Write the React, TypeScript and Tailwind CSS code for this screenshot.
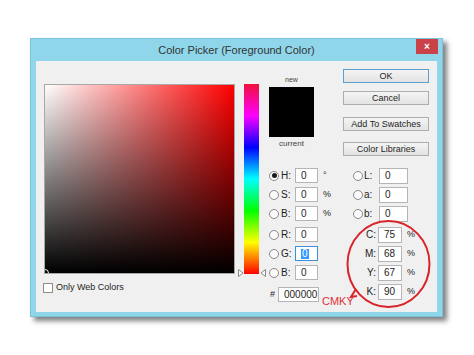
import React from 'react';

const Radio = ({ checked = false }: { checked?: boolean }) => (
  <span className="flex h-[10px] w-[10px] shrink-0 items-center justify-center rounded-full border border-[#8a8a8a] bg-[#fbfbfb]">
    {checked && <span className="h-[5px] w-[5px] rounded-full bg-[#1a1a1a]" />}
  </span>
);

const Field = ({ value, w, h = 15, focused = false }: { value: string; w: number; h?: number; focused?: boolean }) => (
  <span
    className={`flex items-center bg-white pl-[5px] text-[10px] leading-none ${focused ? 'border border-[#3c8fd8]' : 'border border-[#b5b5b5]'}`}
    style={{ width: w, height: h }}
  >
    {focused ? <span className="bg-[#3399ff] px-[1px] text-white">{value}</span> : value}
  </span>
);

const HsbRow = ({ label, value, unit, checked, focused }: { label: string; value: string; unit?: string; checked?: boolean; focused?: boolean }) => (
  <div className="flex h-[19px] items-center">
    <Radio checked={checked} />
    <span className="ml-[2px] w-[14px] text-[10px]">{label}</span>
    <Field value={value} w={23} focused={focused} />
    {unit && <span className="ml-[5px] text-[9px]">{unit}</span>}
  </div>
);

const LabRow = ({ label, value }: { label: string; value: string }) => (
  <div className="flex h-[19px] items-center">
    <Radio />
    <span className="ml-[1px] w-[15px] text-[10px]">{label}</span>
    <Field value={value} w={29} h={16} />
  </div>
);

const CmykRow = ({ label, value }: { label: string; value: string }) => (
  <div className="flex h-[19px] items-center">
    <span className="w-[25px] pr-[2px] text-right text-[10px]">{label}</span>
    <Field value={value} w={24} h={16} />
    <span className="ml-[5px] text-[9px]">%</span>
  </div>
);

const Btn = ({ children, primary = false }: { children: React.ReactNode; primary?: boolean }) => (
  <div
    className={`flex h-[14px] w-[86px] items-center justify-center bg-[linear-gradient(to_bottom,#f4f4f4,#e3e3e3)] text-[9px] leading-none ${primary ? 'border border-[#5c9fcf]' : 'border border-[#adadad]'}`}
  >
    {children}
  </div>
);

export default function App() {
  return (
    <div className="h-[355px] w-[474px] overflow-hidden bg-white pt-[38px] pl-[30px] font-['Liberation_Sans',Arial,sans-serif] text-[#1e1e1e]">
      <div className="flex h-[279px] w-[413px] flex-col border border-[#79c4d8] bg-[#8fd6ea] shadow-[4px_4px_5px_rgba(0,0,0,0.5)]">
        {/* title bar */}
        <div className="relative flex h-[22px] items-center justify-center text-[11px] text-[#333]">
          Color Picker (Foreground Color)
          <div className="absolute right-[4px] top-0 flex h-[15px] w-[22px] items-center justify-center bg-[#cb4148] text-[10px] font-bold text-white">
            ×
          </div>
        </div>

        {/* body */}
        <div className="relative mx-[5px] flex h-[251px] bg-[#f0f0f0] pl-[8px] pt-[8px]">
          {/* left: field + hue */}
          <div className="flex flex-col pt-[15px]">
            <div className="flex">
              <div className="relative h-[190px] w-[191px] overflow-hidden border border-[#a8a8a8] bg-[linear-gradient(to_bottom,transparent,#000),linear-gradient(to_right,#fff,#f00)]">
                <span className="absolute bottom-[-4px] left-[-4px] h-[8px] w-[8px] rounded-full border border-white" />
              </div>
              <div className="relative ml-[9px] h-[190px] w-[15px] bg-[linear-gradient(to_bottom,#f0103c,#f0f,#00f,#0ff,#0f0,#ff0,#f00)]">
                <svg className="absolute bottom-[-3px] left-[-6px]" width="6" height="8" viewBox="0 0 6 8">
                  <path d="M0.5 0.5 L5 4 L0.5 7.5 Z" fill="#fff" stroke="#888" strokeWidth="1" />
                </svg>
                <svg className="absolute bottom-[-3px] right-[-7px]" width="6" height="8" viewBox="0 0 6 8">
                  <path d="M5.5 0.5 L1 4 L5.5 7.5 Z" fill="#fff" stroke="#888" strokeWidth="1" />
                </svg>
              </div>
            </div>
            <div className="mt-[7px] flex items-center">
              <span className="ml-[-1px] h-[10px] w-[10px] border border-[#8a8a8a] bg-white" />
              <span className="ml-[3px] text-[9px]">Only Web Colors</span>
            </div>
          </div>

          {/* right area */}
          <div className="ml-[10px] flex w-[162px] flex-col">
            <div className="flex h-[87px]">
              <div className="flex w-[45px] flex-col items-center">
                <span className="mt-[6px] text-[7px] leading-[10px] text-[#444]">new</span>
                <div className="mt-[2px] h-[50px] w-[45px] bg-black" />
                <span className="mt-[2px] text-[8px] leading-[10px] text-[#444]">current</span>
              </div>
              <div className="ml-[29px] flex flex-col">
                <Btn primary>OK</Btn>
                <div className="mt-[8px]"><Btn>Cancel</Btn></div>
                <div className="mt-[12px]"><Btn>Add To Swatches</Btn></div>
                <div className="mt-[11px]"><Btn>Color Libraries</Btn></div>
              </div>
            </div>

            <div className="mt-[10px] flex">
              <div className="flex w-[84px] flex-col">
                <HsbRow label="H:" value="0" unit="°" checked />
                <HsbRow label="S:" value="0" unit="%" />
                <HsbRow label="B:" value="0" unit="%" />
                <div className="mt-[2px]">
                  <HsbRow label="R:" value="0" />
                  <HsbRow label="G:" value="0" focused />
                  <HsbRow label="B:" value="0" />
                </div>
                <div className="mt-[3px] flex h-[19px] items-center">
                  <span className="ml-[1px] w-[8px] text-[9px]">#</span>
                  <Field value="000000" w={41} />
                </div>
              </div>
              <div className="flex flex-col">
                <LabRow label="L:" value="0" />
                <LabRow label="a:" value="0" />
                <LabRow label="b:" value="0" />
                <div className="mt-[2px]">
                  <CmykRow label="C:" value="75" />
                  <CmykRow label="M:" value="68" />
                  <CmykRow label="Y:" value="67" />
                  <CmykRow label="K:" value="90" />
                </div>
              </div>
            </div>
          </div>

          {/* annotation */}
          <svg className="absolute left-[308px] top-[156px]" width="90" height="94" viewBox="0 0 90 94">
            <ellipse cx="44.5" cy="47" rx="41" ry="43" fill="none" stroke="#d8232a" strokeWidth="2" />
            <path d="M12 72 L7 80 L13 79" fill="none" stroke="#d8232a" strokeWidth="2" />
          </svg>
          <span className="absolute left-[286px] top-[235px] text-[11px] leading-none text-[#e0303a]">CMKY</span>
        </div>
      </div>
    </div>
  );
}
